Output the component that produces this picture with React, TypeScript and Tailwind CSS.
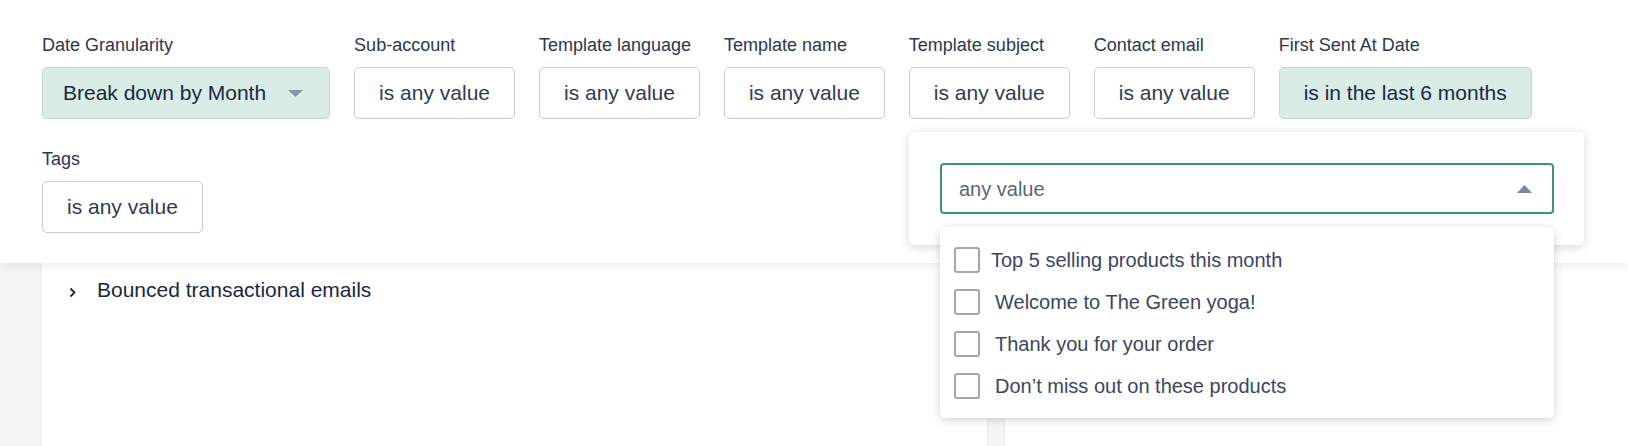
import React from "react";

const filters = [
  { label: "Date Granularity", value: "Break down by Month", active: true, caret: true },
  { label: "Sub-account", value: "is any value" },
  { label: "Template language", value: "is any value" },
  { label: "Template name", value: "is any value" },
  { label: "Template subject", value: "is any value" },
  { label: "Contact email", value: "is any value" },
  { label: "First Sent At Date", value: "is in the last 6 months", active: true },
  { label: "Tags", value: "is any value" },
];

const options = [
  "Top 5 selling products this month",
  "Welcome to The Green yoga!",
  "Thank you for your order",
  "Don’t miss out on these products",
];

const FilterItem = ({
  label,
  value,
  active,
  caret,
}: {
  label: string;
  value: string;
  active?: boolean;
  caret?: boolean;
}) => (
  <div className="flex flex-col">
    <div className="text-[18px] leading-[22px] text-[#2b374d] mb-[11px]">{label}</div>
    <div
      className={
        active
          ? "h-[52px] flex items-center rounded-[5px] border border-[#c4d5cf] bg-[#d9ece6] text-[#1b2942] px-6 text-[21px]"
          : "h-[52px] flex items-center rounded-[5px] border border-[#cbcbcb] bg-white text-[#2f3b53] px-6 text-[21px]"
      }
    >
      <span className={caret ? "-ml-1" : ""}>{value}</span>
      {caret && (
        <svg width="15" height="7" viewBox="0 0 15 7" className="ml-[22px] mr-[2px]">
          <path d="M0 0 L15 0 L7.5 7 Z" fill="#8a93a6" />
        </svg>
      )}
    </div>
  </div>
);

export default function App() {
  return (
    <div
      className="relative w-[1628px] h-[446px] overflow-hidden bg-[#f5f5f5]"
      style={{ fontFamily: '"Liberation Sans", Arial, sans-serif' }}
    >
      {/* Filter header */}
      <div className="relative z-10 bg-white pt-[34px] pb-[30px] pl-[42px] pr-[42px] shadow-[0_3px_8px_rgba(0,0,0,0.07)]">
        <div className="flex flex-wrap gap-x-6 gap-y-[29px]">
          {filters.map((f) => (
            <FilterItem key={f.label} {...f} />
          ))}
        </div>
      </div>

      {/* Cards */}
      <div className="flex gap-[18px] pl-[42px] h-[200px]">
        <div className="w-[945px] bg-white shadow-[0_0_4px_rgba(0,0,0,0.06)] pt-[14px] pl-[27px]">
          <div className="flex items-center gap-[20px] text-[21px] leading-[26px] text-[#1a2740]">
            <svg width="8" height="11" viewBox="0 0 8 11" className="mt-[4px]">
              <path d="M1.5 1.5 L5.5 5.5 L1.5 9.5" stroke="#1a2740" strokeWidth="1.8" fill="none" />
            </svg>
            <span>Bounced transactional emails</span>
          </div>
        </div>
        <div className="flex-1 bg-white shadow-[0_0_4px_rgba(0,0,0,0.06)]" />
      </div>

      {/* Popover */}
      <div className="absolute z-20 left-[909px] top-[132px] w-[675px] bg-white rounded-[6px] shadow-[0_2px_10px_rgba(0,0,0,0.16)] pt-[31px] pb-[31px] pl-[31px] pr-[30px]">
        <div className="relative">
          <div className="h-[51px] flex items-center justify-between rounded-[4px] border-2 border-[#3f9571] pl-[17px] pr-[20px]">
            <span className="text-[20px] text-[#5b6579]">any value</span>
            <svg width="15" height="8" viewBox="0 0 15 8">
              <path d="M0 8 L15 8 L7.5 0 Z" fill="#7e879a" />
            </svg>
          </div>

          {/* Options list */}
          <div className="absolute left-0 top-[64px] w-[614px] bg-white rounded-[6px] shadow-[0_2px_10px_rgba(0,0,0,0.18)] pt-[12px] pb-[11px] pl-[14px]">
            {options.map((o, i) => (
              <div key={o} className="h-[42px] flex items-center">
                <div className="w-[26px] h-[26px] rounded-[3px] border-2 border-[#a6a6a6] bg-white" />
                <span className={i === 0 ? "ml-[11px] text-[20px] text-[#3a4660]" : "ml-[15px] text-[20px] text-[#3a4660]"}>{o}</span>
              </div>
            ))}
          </div>
        </div>
      </div>
    </div>
  );
}
